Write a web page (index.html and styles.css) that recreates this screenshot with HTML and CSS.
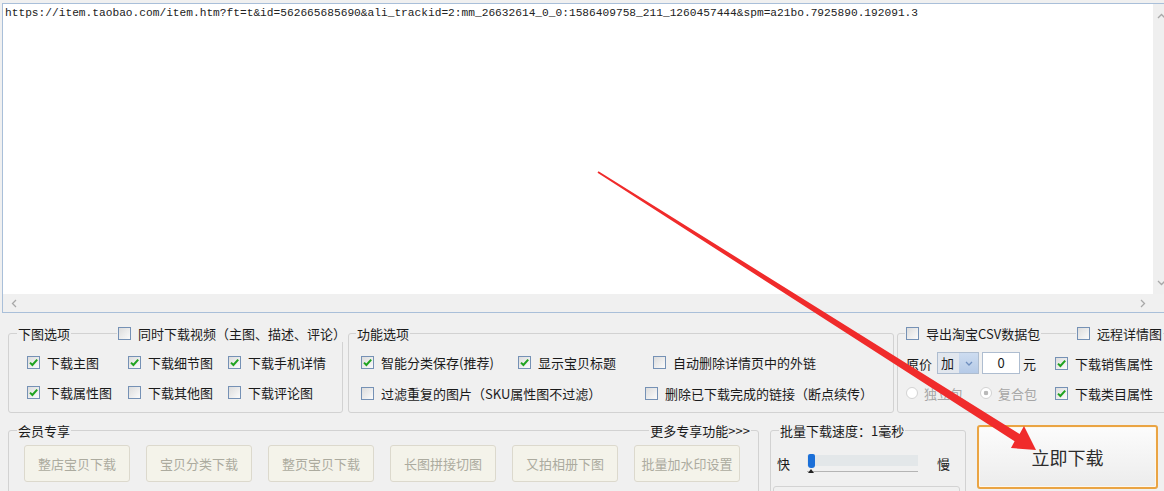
FILE: index.html
```html
<!DOCTYPE html>
<html lang="zh-CN">
<head>
<meta charset="utf-8">
<title>下载</title>
<link rel="stylesheet" href="styles.css">
</head>
<body>
<div class="editor">
  <div class="editor-text">https://item.taobao.com/item.htm?ft=t&amp;id=562665685690&amp;ali_trackid=2:mm_26632614_0_0:1586409758_211_1260457444&amp;spm=a21bo.7925890.192091.3</div>
  <div class="vscroll">
    <svg width="9" height="6" viewBox="0 0 9 6"><polyline points="1,5 4.5,1.5 8,5" fill="none" stroke="#a8a8a8" stroke-width="1.3"/></svg>
    <svg width="9" height="6" viewBox="0 0 9 6"><polyline points="1,1 4.5,4.5 8,1" fill="none" stroke="#a8a8a8" stroke-width="1.3"/></svg>
  </div>
  <div class="hscroll">
    <svg width="6" height="9" viewBox="0 0 6 9"><polyline points="5,1 1.5,4.5 5,8" fill="none" stroke="#a8a8a8" stroke-width="1.3"/></svg>
    <svg width="6" height="9" viewBox="0 0 6 9"><polyline points="1,1 4.5,4.5 1,8" fill="none" stroke="#a8a8a8" stroke-width="1.3"/></svg>
  </div>
  <div class="corner"></div>
</div>

<div class="options">
  <section class="group g1">
    <div class="group-head">
      <span class="legend">下图选项</span>
      <label class="chk legend-item video"><span class="box"></span>同时下载视频（主图、描述、评论）</label>
    </div>
    <div class="body grid3">
      <label class="chk"><span class="box"><svg width="11" height="11" viewBox="0 0 11 11"><path d="M2 5.6 4.4 8 9.2 2.6" fill="none" stroke="#1fa31f" stroke-width="2"/></svg></span>下载主图</label>
      <label class="chk"><span class="box"><svg width="11" height="11" viewBox="0 0 11 11"><path d="M2 5.6 4.4 8 9.2 2.6" fill="none" stroke="#1fa31f" stroke-width="2"/></svg></span>下载细节图</label>
      <label class="chk"><span class="box"><svg width="11" height="11" viewBox="0 0 11 11"><path d="M2 5.6 4.4 8 9.2 2.6" fill="none" stroke="#1fa31f" stroke-width="2"/></svg></span>下载手机详情</label>
      <label class="chk"><span class="box"><svg width="11" height="11" viewBox="0 0 11 11"><path d="M2 5.6 4.4 8 9.2 2.6" fill="none" stroke="#1fa31f" stroke-width="2"/></svg></span>下载属性图</label>
      <label class="chk"><span class="box"></span>下载其他图</label>
      <label class="chk"><span class="box"></span>下载评论图</label>
    </div>
  </section>

  <section class="group g2">
    <div class="group-head">
      <span class="legend">功能选项</span>
    </div>
    <div class="body rows">
      <div class="row">
        <label class="chk w157"><span class="box"><svg width="11" height="11" viewBox="0 0 11 11"><path d="M2 5.6 4.4 8 9.2 2.6" fill="none" stroke="#1fa31f" stroke-width="2"/></svg></span>智能分类保存(推荐)</label>
        <label class="chk w135"><span class="box"><svg width="11" height="11" viewBox="0 0 11 11"><path d="M2 5.6 4.4 8 9.2 2.6" fill="none" stroke="#1fa31f" stroke-width="2"/></svg></span>显示宝贝标题</label>
        <label class="chk"><span class="box"></span>自动删除详情页中的外链</label>
      </div>
      <div class="row">
        <label class="chk w284"><span class="box"></span>过滤重复的图片（SKU属性图不过滤）</label>
        <label class="chk"><span class="box"></span>删除已下载完成的链接（断点续传）</label>
      </div>
    </div>
  </section>

  <section class="group g3">
    <div class="group-head">
      <label class="chk legend-item csv"><span class="box"></span>导出淘宝CSV数据包</label>
      <label class="chk legend-item remote"><span class="box"></span>远程详情图</label>
    </div>
    <div class="body g3-body">
      <div class="price">
        <span class="price-label">原价</span>
        <div class="combo">
          <span class="combo-val">加</span>
          <span class="combo-btn"><svg width="8" height="5" viewBox="0 0 8 5"><polyline points="1,1 4,4 7,1" fill="none" stroke="#6f8fbf" stroke-width="1.3"/></svg></span>
        </div>
        <span class="num">0</span>
        <span class="yuan">元</span>
      </div>
      <label class="chk"><span class="box"><svg width="11" height="11" viewBox="0 0 11 11"><path d="M2 5.6 4.4 8 9.2 2.6" fill="none" stroke="#1fa31f" stroke-width="2"/></svg></span>下载销售属性</label>
      <div class="radios">
        <label class="radio r1"><span class="circle"></span>独立包</label>
        <label class="radio"><span class="circle dot"></span>复合包</label>
      </div>
      <label class="chk"><span class="box"><svg width="11" height="11" viewBox="0 0 11 11"><path d="M2 5.6 4.4 8 9.2 2.6" fill="none" stroke="#1fa31f" stroke-width="2"/></svg></span>下载类目属性</label>
    </div>
  </section>
</div>

<div class="bottom">
  <section class="group member">
    <div class="group-head spread">
      <span class="legend">会员专享</span>
      <span class="legend more">更多专享功能&gt;&gt;&gt;</span>
    </div>
    <div class="btns">
      <span class="btn-dis">整店宝贝下载</span>
      <span class="btn-dis">宝贝分类下载</span>
      <span class="btn-dis">整页宝贝下载</span>
      <span class="btn-dis">长图拼接切图</span>
      <span class="btn-dis">又拍相册下图</span>
      <span class="btn-dis">批量加水印设置</span>
    </div>
  </section>

  <section class="group speed">
    <div class="group-head">
      <span class="legend">批量下载速度：1毫秒</span>
    </div>
    <div class="speed-row">
      <span class="fast">快</span>
      <div class="slider">
        <div class="track"></div>
        <div class="tickline"></div>
        <span class="thumb"></span>
        <span class="tickmark"></span>
      </div>
      <span class="slow">慢</span>
    </div>
    <div class="inner-box"></div>
  </section>

  <button class="go">立即下载</button>
</div>

<svg class="arrow" width="1164" height="491" viewBox="0 0 1164 491">
  <polygon points="598.5,171.2 1019.6,433.9 1024,426 1036,450 1011,448 1014.6,441.2 597.5,172.8" fill="#f02b2b"/>
</svg>
</body>
</html>
```

FILE: styles.css
```css
* { box-sizing: border-box; }
html, body { margin: 0; height: 491px; overflow: hidden; }
body {
  position: relative;
  width: 1164px;
  background: #f0f0f0;
  font-family: "Noto Sans CJK SC", "Noto Sans", sans-serif;
  font-size: 13px;
  color: #1a1a1a;
}

/* editor */
.editor {
  margin: 3px 0 0 2px;
  width: 1169px;
  height: 310px;
  border: 1px solid #a9bfd9;
  display: grid;
  grid-template-columns: 1fr 17px;
  grid-template-rows: 1fr 18px;
  background: #fff;
}
.editor-text {
  font-family: "Liberation Mono", monospace;
  font-size: 11.2px;
  line-height: 14px;
  padding: 2px 0 0 2px;
  color: #222;
  white-space: nowrap;
  overflow: hidden;
}
.vscroll {
  background: #efefef;
  display: flex;
  flex-direction: column;
  justify-content: space-between;
  align-items: center;
  padding: 9px 0 8px;
}
.hscroll {
  background: #f0f0f0;
  display: flex;
  justify-content: space-between;
  align-items: center;
  padding: 0 7px 0 8px;
}
.corner { background: #f0f0f0; }

/* groups */
.group {
  border: 1px solid #d2d2d2;
  border-radius: 3px;
  flex: none;
}
.group-head {
  display: flex;
  align-items: center;
  height: 17px;
  margin: -9px 0 0 7px;
}
.legend, .legend-item {
  background: #f0f0f0;
  padding: 0 1px;
  line-height: 17px;
  white-space: nowrap;
}

.chk {
  display: inline-flex;
  align-items: center;
  gap: 7px;
  white-space: nowrap;
  line-height: 17px;
}
.box {
  width: 13px;
  height: 13px;
  flex: none;
  border: 1px solid #7591b5;
  background: linear-gradient(135deg, #dcdcdc, #fbfbfb);
  display: flex;
  align-items: center;
  justify-content: center;
}

.options {
  display: flex;
  padding: 20px 0 0 8px;
}
.g1 { width: 335px; }
.g1 .group-head { margin-left: 8px; }
.video { margin-left: 46px; }
.grid3 {
  display: grid;
  grid-template-columns: 101px 100px auto;
  row-gap: 13px;
  padding: 12px 0 11px 18px;
}

.g2 { width: 546px; margin-left: 5px; }
.rows {
  display: flex;
  flex-direction: column;
  gap: 14px;
  padding: 12px 0 10px 12px;
}
.row { display: flex; }
.w157 { width: 157px; }
.w135 { width: 135px; }
.w284 { width: 284px; }

.g3 { width: 300px; margin-left: 3px; }
.csv { width: 136px; }
.remote { margin-left: 35px; }
.g3-body {
  display: grid;
  grid-template-columns: 149px auto;
  grid-auto-rows: 22px;
  row-gap: 8px;
  align-items: center;
  padding: 10px 0 8px 8px;
}
.price { display: flex; align-items: center; }
.price-label { width: 26px; }
.combo {
  display: flex;
  width: 42px;
  height: 22px;
  margin-left: 5px;
  border: 1px solid #aebdd0;
}
.combo-val {
  flex: 1;
  background: #e2e7ee;
  padding-left: 3px;
  line-height: 20px;
}
.combo-btn {
  width: 19px;
  background: linear-gradient(#cddcf0, #b5cae7);
  display: flex;
  align-items: center;
  justify-content: center;
}
.num {
  width: 38px;
  height: 22px;
  margin-left: 3px;
  border: 1px solid #aebdd0;
  background: #fff;
  text-align: center;
  line-height: 20px;
}
.yuan { margin-left: 3px; }
.radios { display: flex; align-items: center; }
.radio {
  display: inline-flex;
  align-items: center;
  gap: 6px;
  color: #a6a6a6;
  white-space: nowrap;
}
.r1 { width: 74px; }
.circle {
  width: 12px;
  height: 12px;
  flex: none;
  border-radius: 50%;
  border: 1px solid #d3d3d3;
  background: #fff;
}
.circle.dot { background: radial-gradient(circle, #b9b9b9 0 2px, #fff 2.6px); }

/* bottom */
.bottom {
  display: flex;
  align-items: flex-start;
  padding: 17px 0 0 8px;
}
.member { width: 751px; padding-bottom: 20px; }
.spread { justify-content: space-between; margin: -9px 7px 0 8px; }
.btns {
  display: flex;
  gap: 16px;
  padding: 6px 0 0 15px;
}
.btn-dis {
  width: 106px;
  height: 37px;
  border: 1px solid #dcd9cd;
  border-radius: 3px;
  background: #f4f3ea;
  color: #acab9f;
  display: flex;
  align-items: center;
  justify-content: center;
}

.speed { width: 196px; margin-left: 11px; }
.speed .group-head { margin-left: 8px; }
.speed-row {
  display: flex;
  align-items: center;
  padding: 15px 0 0 6px;
}
.fast { width: 30px; line-height: 14px; }
.slider {
  position: relative;
  width: 111px;
  height: 19px;
  padding-top: 1px;
}
.track { height: 11px; background: #e3e7e9; }
.tickline { margin-top: 5px; height: 1px; background: #b4b4b4; }
.thumb {
  position: absolute;
  left: 1px;
  top: 0;
  width: 7px;
  height: 14px;
  background: #1b6fd8;
  border-radius: 2px 2px 3px 3px;
}
.tickmark {
  position: absolute;
  left: 1px;
  top: 15px;
  border-left: 3px solid transparent;
  border-right: 3px solid transparent;
  border-bottom: 4px solid #222;
}
.slow { margin-left: 19px; line-height: 14px; }
.inner-box {
  margin: 13px 5px 0 2px;
  height: 20px;
  border: 1px solid #d3d3d3;
  border-radius: 3px;
}

.go {
  margin: -5px 0 0 11px;
  width: 181px;
  height: 64px;
  flex: none;
  border: 2px solid #eaa443;
  border-radius: 3px;
  background: linear-gradient(#fcfcfc, #ececec);
  box-shadow: inset 0 0 0 1px #fff7ea;
  font-family: "Noto Sans CJK SC", "Noto Sans", sans-serif;
  font-size: 18px;
  color: #2c2c2c;
  padding: 0;
}

.arrow {
  position: absolute;
  left: 0;
  top: 0;
  pointer-events: none;
}
```
